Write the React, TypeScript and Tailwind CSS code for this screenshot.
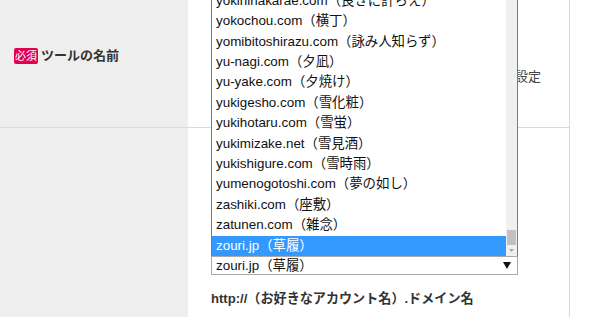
import React from "react";

const items = [
  "yokinihakarae.com（良きに計らえ）",
  "yokochou.com（横丁）",
  "yomibitoshirazu.com（詠み人知らず）",
  "yu-nagi.com（夕凪）",
  "yu-yake.com（夕焼け）",
  "yukigesho.com（雪化粧）",
  "yukihotaru.com（雪蛍）",
  "yukimizake.net（雪見酒）",
  "yukishigure.com（雪時雨）",
  "yumenogotoshi.com（夢の如し）",
  "zashiki.com（座敷）",
  "zatunen.com（雑念）",
  "zouri.jp（草履）",
];

const font = { fontFamily: '"Liberation Sans", "Noto Sans CJK JP", sans-serif' };

export default function App() {
  return (
    <div className="w-[600px] h-[317px] overflow-hidden bg-white text-[#333]" style={font}>
      <div className="w-[570px] border-r border-[#dadada]">
        {/* Row 1 */}
        <div className="flex h-[128px] border-b border-[#dadada]">
          <div className="w-[188px] bg-[#eeeeee] pl-[14px] pt-[48px] flex items-start">
            <span className="inline-flex items-center justify-center w-[24px] h-[16px] rounded-[2px] bg-[#e2004f] text-white text-[11px] leading-none">必須</span>
            <span className="ml-[3px] text-[13px] font-bold leading-[16px] text-[#333]">ツールの名前</span>
          </div>
          <div className="flex-1 flex justify-end pr-[28px] pt-[68px]">
            <span className="text-[13px] leading-[18px] text-[#444]">ツール名を設定</span>
          </div>
        </div>
        {/* Row 2 */}
        <div className="flex h-[189px]">
          <div className="w-[188px] bg-[#eeeeee]"></div>
          <div className="flex-1 pl-[23px] pt-[128px]">
            <div className="relative w-[307px]">
              {/* open dropdown list */}
              <div className="absolute left-0 bottom-full w-[307px] h-[265px] bg-white border-l border-r border-[#7a7a7a] flex">
                <div className="flex-1 flex flex-col justify-end overflow-hidden">
                  {items.map((it, i) => {
                    const sel = i === items.length - 1;
                    return (
                      <div
                        key={it}
                        className={
                          "h-[20.4px] shrink-0 pl-[4px] text-[13.4px] leading-[20.4px] whitespace-nowrap " +
                          (sel ? "bg-[#3399ff] text-white" : "text-[#111]")
                        }
                      >
                        {it}
                      </div>
                    );
                  })}
                </div>
                <div className="w-[11px] bg-[#f0f0f0] flex flex-col justify-end">
                  <div className="mx-[1px] h-[15px] bg-[#c1c1c1]"></div>
                  <div className="h-[11px] flex items-center justify-center">
                    <svg width="5" height="3" viewBox="0 0 5 3">
                      <path d="M0 0 L5 0 L2.5 3 Z" fill="#a3a3a3" />
                    </svg>
                  </div>
                </div>
              </div>
              {/* select box */}
              <div className="h-[19px] border border-[#a9a9a9] bg-white flex items-center justify-between pl-[4px] pr-[6px]">
                <span className="text-[13.4px] leading-[17px] text-[#111]">zouri.jp（草履）</span>
                <svg width="8" height="7" viewBox="0 0 8 7">
                  <path d="M0 0 L8 0 L4 7 Z" fill="#111" />
                </svg>
              </div>
            </div>
            <div className="mt-[15px] text-[13.1px] font-bold leading-[18px] text-[#333]">
              http://（お好きなアカウント名）.ドメイン名
            </div>
          </div>
        </div>
      </div>
    </div>
  );
}
